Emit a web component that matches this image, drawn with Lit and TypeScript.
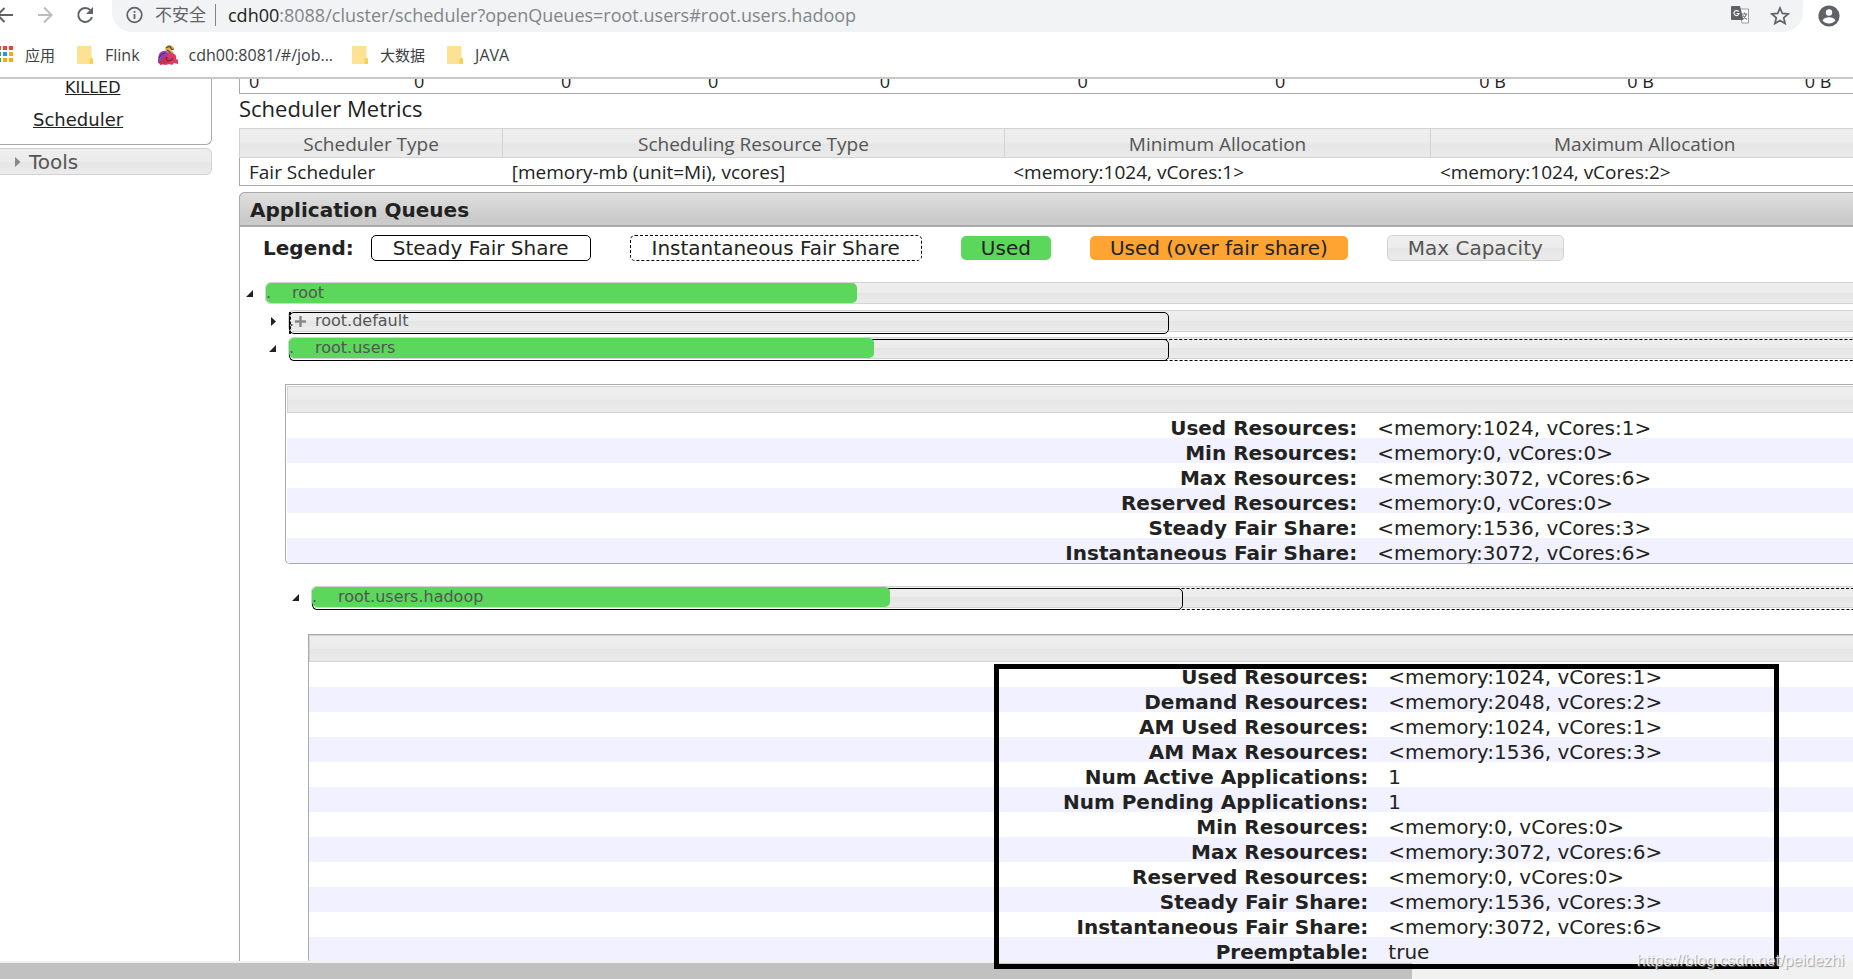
import { LitElement, html, css, svg, nothing } from "lit";
import { customElement, property } from "lit/decorators.js";
import { classMap } from "lit/directives/class-map.js";
import { styleMap } from "lit/directives/style-map.js";

type Row = [label: string, value: string];

interface Queue {
  name: string;
  open: boolean;
  used: number;
  steady?: number;
  instant?: number;
  capacity: number;
  details?: Row[];
  inset?: boolean;
  children?: Queue[];
}

const QUEUES: Queue = {
  name: "root",
  open: true,
  used: 33.4,
  capacity: 81,
  children: [
    { name: "root.default", open: false, used: 0, steady: 50, instant: 0, capacity: 81.4 },
    {
      name: "root.users",
      open: true,
      used: 33.2,
      steady: 50,
      instant: 100,
      capacity: 81.4,
      inset: true,
      details: [
        ["Used Resources:", "<memory:1024, vCores:1>"],
        ["Min Resources:", "<memory:0, vCores:0>"],
        ["Max Resources:", "<memory:3072, vCores:6>"],
        ["Reserved Resources:", "<memory:0, vCores:0>"],
        ["Steady Fair Share:", "<memory:1536, vCores:3>"],
        ["Instantaneous Fair Share:", "<memory:3072, vCores:6>"],
      ],
      children: [
        {
          name: "root.users.hadoop",
          open: true,
          used: 33.2,
          steady: 50,
          instant: 100,
          capacity: 81.4,
          details: [
            ["Used Resources:", "<memory:1024, vCores:1>"],
            ["Demand Resources:", "<memory:2048, vCores:2>"],
            ["AM Used Resources:", "<memory:1024, vCores:1>"],
            ["AM Max Resources:", "<memory:1536, vCores:3>"],
            ["Num Active Applications:", "1"],
            ["Num Pending Applications:", "1"],
            ["Min Resources:", "<memory:0, vCores:0>"],
            ["Max Resources:", "<memory:3072, vCores:6>"],
            ["Reserved Resources:", "<memory:0, vCores:0>"],
            ["Steady Fair Share:", "<memory:1536, vCores:3>"],
            ["Instantaneous Fair Share:", "<memory:3072, vCores:6>"],
            ["Preemptable:", "true"],
          ],
        },
      ],
    },
  ],
};

@customElement("browser-bar")
class BrowserBar extends LitElement {
  static styles = css`
    :host { display: block; flex: none; background: #fff; border-bottom: 2px solid #c8c8c8;
      font-family: "Open Sans", "Noto Sans CJK SC", sans-serif; color: #3c4043; overflow: hidden; }
    .toolbar { display: flex; align-items: center; height: 32px; }
    button { border: 0; padding: 0; background: none; display: flex; flex: none; }
    svg { display: block; flex: none; }
    .nav { display: flex; align-items: center; width: 112px; height: 30px; flex: none; align-self: flex-start; }
    .nav button { width: 38px; }
    .address { flex: 1; display: flex; align-items: center; align-self: stretch; background: #f1f3f4;
      border-radius: 0 0 20px 20px; padding: 0 13px 2px 14px; font-size: 18px; line-height: 28px; color: #80868b; white-space: nowrap; }
    .warn { color: #5f6368; margin-left: 12px; font-size: 17px; }
    .rule { width: 1px; height: 22px; background: #80868b; margin: 0 12px 0 9px; }
    .host { color: #202124; }
    .url { flex: 1; }
    .tools { display: flex; gap: 20px; align-items: center; }
    .profile { margin: 0 13px 0 15px; }
    .bookmarks { display: flex; align-items: center; height: 45px; font-size: 15px; line-height: 24px; }
    a { display: flex; align-items: center; gap: 11px; color: inherit; text-decoration: none; white-space: nowrap; margin-right: 22px; }
    .apps { margin-left: -3px; }
    .latin { font-size: 16px; }
    .jobs { margin: 0 19px 0 -4px; }
  `;

  private folder() {
    return html`<svg width="17" height="18" viewBox="0 0 17 18"><path d="M1 0h12.500q1 0 1 1v11l1.500 1v4q0 1-1 1H1q-1 0-1-1V1q0-1 1-1z" fill="#fde293"/><path d="M12.500 18v-4.500l2-2 1.500 1.500v4q0 1-1 1z" fill="#fbcf50"/></svg>`;
  }

  render() {
    const colors = ["#ea4335", "#ea4335", "#ea4335", "#34a853", "#2196f3", "#fbab04", "#34a853", "#fbab04", "#fbab04"];
    return html`
      <div class="toolbar">
        <div class="nav">
          <button aria-label="Back"><svg width="14" height="18" viewBox="0 0 14 18" fill="none" stroke="#5f6368" stroke-width="2"><path d="M13 9H-2M4.500 2l-7 7 7 7"/></svg></button>
          <button aria-label="Forward"><svg width="15" height="18" viewBox="0 0 15 18" fill="none" stroke="#babcbe" stroke-width="2"><path d="M-1 9H13M6 1.500L13.500 9 6 16.500"/></svg></button>
          <button aria-label="Reload"><svg width="18" height="18" viewBox="0 0 18 18"><path d="M14.500 4.200A7 7 0 1 0 16 11" fill="none" stroke="#5f6368" stroke-width="2"/><path d="M17 1v7h-7z" fill="#5f6368"/></svg></button>
        </div>
        <div class="address">
          <svg width="17" height="18" viewBox="0 0 17 18"><circle cx="8.500" cy="9" r="7.300" fill="none" stroke="#5f6368" stroke-width="1.700"/><path d="M8.500 8v5M8.500 5v1.800" stroke="#5f6368" stroke-width="1.800"/></svg>
          <span class="warn">不安全</span><span class="rule"></span>
          <span class="url"><span class="host">cdh00</span>:8088/cluster/scheduler?openQueues=root.users#root.users.hadoop</span>
          <span class="tools">
            <button aria-label="Translate"><svg width="19" height="18" viewBox="0 0 19 18"><path d="M8 3h9.500v14H11z" fill="#fff" stroke="#9a9da0"/><path d="M1 0h8l3.500 14H1q-1 0-1-1V1q0-1 1-1z" fill="#5f6368"/><path d="M7.600 5.600A2.500 2.500 0 1 0 8 7.500H5.500" fill="none" stroke="#fff" stroke-width="1.200"/><path d="M11 8h5.500M13.500 6.500V8M15.500 8q-1 3.500-4 5M12 9.500q1.500 2.500 4 4" fill="none" stroke="#777" stroke-width="1.100"/></svg></button>
            <button aria-label="Bookmark"><svg width="20" height="19" viewBox="0 0 20 19"><path d="M10 2l2.300 5.400 5.900.5-4.500 3.900 1.400 5.700-5.100-3-5.100 3 1.400-5.700L1.800 7.900l5.900-.5z" fill="none" stroke="#5f6368" stroke-width="1.700"/></svg></button>
          </span>
        </div>
        <button class="profile" aria-label="Profile"><svg width="22" height="22" viewBox="0 0 22 22"><circle cx="11" cy="11" r="10.600" fill="#5f6368"/><circle cx="11" cy="7.500" r="3.200" fill="#fff"/><path d="M4.500 15.500q2-3.200 6.500-3.200t6.500 3.200q-2.500 3-6.500 3t-6.500-3z" fill="#fff"/></svg></button>
      </div>
      <nav class="bookmarks">
        <a class="apps" href="#"><svg width="17" height="17" viewBox="0 0 17 17">${colors.map((c, i) => svg`<rect x=${(i % 3) * 6} y=${Math.floor(i / 3) * 6} width="4" height="4" fill=${c} />`)}</svg>应用</a>
        <a class="latin" href="#">${this.folder()}Flink</a>
        <a class="latin jobs" href="#"><svg width="20" height="20" viewBox="0 0 20 20"><path d="M7 4Q8 0 12 0q4 1 4 4l-3 1 3 3-4 2-4-3z" fill="#d9b25c"/><path d="M8 3q4-3 5 0 0 2 3 1M9 5l4 3" fill="none" stroke="#6b4423" stroke-width="1.300"/><path d="M8 8q5-2 8 1 3 1 2 5l2 1v4l-4-1-2 2-3-1-3 1-5-1z" fill="#dc3a5e"/><path d="M0 15Q0 7 5 6q4-1 5 3l-1 4-4 3-2 3-3-1z" fill="#8a44b4"/><path d="M1 17q3-1 3-4 3-3 6-1l1 5-5 2-4 1z" fill="#c9304e"/><path d="M1 13q2-5 6-5M9 12q-2 3 1 4 4 0 5-3" fill="none" stroke="#5a1d55" stroke-width="1"/></svg>cdh00:8081/#/job...</a>
        <a href="#">${this.folder()}大数据</a>
        <a class="latin" href="#">${this.folder()}JAVA</a>
      </nav>
    `;
  }
}

@customElement("queue-item")
class QueueItem extends LitElement {
  @property({ attribute: false }) queue!: Queue;

  static styles = css`
    :host { display: block; }
    .line { display: flex; align-items: center; }
    .toggle { width: 23px; height: 22px; flex: none; border: 0; padding: 0 0 0 4px; background: none; display: flex; align-items: center; }
    .track { flex: 1; display: flex; }
    .bar { position: relative; display: flex; align-items: center; box-sizing: border-box; height: 22px;
      border: 1px solid #d3d3d3; border-radius: 5px; text-decoration: none; color: #555; font-size: 16px; line-height: 20px;
      background: linear-gradient(#eee, #ececec 50%, #e5e5e5 52%, #ebebeb); }
    .share, .used { position: absolute; left: 0; box-sizing: border-box; border-radius: 5px; }
    .share { top: 1px; height: 22px; }
    .steady { border: 1px solid #000; }
    .instant { border: 1px dashed #000; }
    .used { top: 0; height: 20px; background: #5bd75b; }
    .name { position: relative; padding-left: 9px; }
    .dot { position: relative; width: 6px; }
    .mark { position: relative; width: 11px; height: 11px; }
    .nested { padding-left: 23px; }
    .nested > queue-item { margin-top: 5px; }
    .nested > queue-item:first-child { margin-top: 6px; }
    .nested.after > queue-item:first-child { margin-top: 22px; }
    .panel { margin: 26px 0 0 20px; border: 1px solid #aaa; border-right: 0; border-radius: 0 0 0 5px; overflow: hidden; }
    .panel.inset { margin-top: 25px; padding: 1px 0 0 1px; }
    .head { height: 25px; border: 1px solid #d3d3d3; background: linear-gradient(#eee, #ececec 50%, #e5e5e5 52%, #ebebeb); }
    table { width: 100%; border-collapse: collapse; table-layout: fixed; font-size: 20px; line-height: 20px; color: #222; }
    tr:nth-child(even) { background: #f1f1ff; }
    th { width: 49.4%; text-align: right; padding: 5px 9px 0 0; font-weight: bold; }
    td { text-align: left; padding: 5px 0 0 11px; }
  `;

  render() {
    const q = this.queue;
    const w = (n: number) => styleMap({ width: `${n}%` });
    return html`
      <div class="line">
        <button class="toggle" aria-label="Toggle ${q.name}" aria-expanded=${q.open}>
          <svg width="8" height="9" viewBox="0 0 8 9"><path d=${q.open ? "M7 1v7H0z" : "M2 0l5 4.500-5 4.500z"} fill="#222"/></svg>
        </button>
        <div class="track">
          <a class="bar" href="#${q.name}" style=${w(q.capacity)}>
            ${q.instant === undefined ? nothing : html`<span class="share instant" style=${w(q.instant)}></span>`}
            ${q.steady === undefined ? nothing : html`<span class="share steady" style=${w(q.steady)}></span>`}
            <span class="used" style=${w(q.used)}></span>
            <span class="dot">.</span>
            <svg class="mark" viewBox="0 0 11 11">${q.open ? nothing : svg`<path d="M5.500 0v11M0 5.500h11" stroke="#888" stroke-width="2.500"/>`}</svg>
            <span class="name">${q.name}</span>
          </a>
        </div>
      </div>
      ${q.details
        ? html`<div class=${classMap({ panel: true, inset: !!q.inset })}>
            <div class="head"></div>
            <table>
              ${q.details.map(([k, v]) => html`<tr><th scope="row">${k}</th><td>${v}</td></tr>`)}
            </table>
          </div>`
        : nothing}
      ${q.children
        ? html`<div class=${classMap({ nested: true, after: !!q.details })}>
            ${q.children.map((c) => html`<queue-item .queue=${c}></queue-item>`)}
          </div>`
        : nothing}
    `;
  }
}

@customElement("app-root")
class AppRoot extends LitElement {
  static styles = css`
    :host { display: flex; flex-direction: column; height: 100vh; position: relative; overflow: hidden; background: #fff;
      font-family: "DejaVu Sans", Verdana, sans-serif; color: #222; }
    .view { flex: 1; min-height: 0; overflow: hidden; }
    .page { display: flex; align-items: flex-start; gap: 27px; width: 132.4vw; }
    .side { width: 212px; flex: none; }
    .links { border: 1px solid #aaa; border-top: 0; border-left: 0; border-radius: 0 0 6px 0; height: 65px; display: flex; flex-direction: column; }
    .links a { color: #222; text-decoration: underline; align-self: flex-start; }
    .killed { font-size: 16px; line-height: 20px; margin: -1px 0 0 65px; }
    .sched { font-size: 18px; line-height: 22px; margin: 11px 0 0 33px; }
    .fold { margin-top: 3px; width: 100%; height: 27px; box-sizing: border-box; display: flex; align-items: center; gap: 8px; border: 1px solid #d3d3d3; border-left: 0;
      border-radius: 0 6px 6px 0; padding: 1px 0 0 15px; font: 20px/24px "DejaVu Sans", Verdana, sans-serif; color: #555;
      background: linear-gradient(#eee, #ececec 50%, #e5e5e5 52%, #ebebeb); }
    main { flex: 1; min-width: 0; }
    .metrics { width: 100%; table-layout: fixed; border-collapse: collapse; font-family: "Open Sans", sans-serif; font-size: 19px; line-height: 26px; }
    .metrics td { padding: 2px 0 0 9px; line-height: 25px; text-align: left; border-bottom: 1px solid #aaa; white-space: nowrap; }
    .metrics td:first-child { border-left: 1px solid #aaa; }
    .metrics.top { font-size: 18px; margin-top: -8px; }
    .metrics.top td { padding: 0 0 2px 9px; line-height: 20px; }
    .metrics th { border: 1px solid #d3d3d3; font-weight: normal; color: #555; padding: 2px 0 0; background: linear-gradient(#eee, #ececec 50%, #e5e5e5 52%, #ebebeb); }
    h2 { margin: 0; padding-bottom: 6px; font: 22px/28px "Open Sans", sans-serif; }
    .queues { margin-top: 6px; border-left: 1px solid #aaa; border-top-left-radius: 6px; }
    h3 { margin: 0 0 0 -1px; height: 32px; border: 1px solid #aaa; border-bottom-width: 2px; border-top-left-radius: 6px; padding-left: 10px;
      font-size: 20px; line-height: 34px; background: linear-gradient(#dfdfdf, #cbcbcb 80%, #cbcbcb); }
    .legend { display: flex; align-items: center; gap: 39px; padding: 8px 0 21px 23px; font-size: 20px; line-height: 24px; white-space: nowrap; }
    .legend b { margin-right: -22px; }
    .chip { padding: 0 20px; border-radius: 5px; }
    .chip.steady { padding: 0 21px; border: 1px solid #000; }
    .chip.instant { padding: 0 21px; border: 1px dashed #000; }
    .chip.used { background: #5bd75b; }
    .chip.over { background: #ffa333; }
    .chip.max { border: 1px solid #d3d3d3; color: #555; background: linear-gradient(#eee, #ececec 50%, #e5e5e5 52%, #ebebeb); }
    .tree { padding-left: 2px; }
    .scroll { height: 18px; flex: none; display: flex; align-items: flex-end; background: #f1f1f1; }
    .thumb { height: 16px; width: 76.2%; background: #c1c1c1; }
    .highlight { position: absolute; left: 53.64%; top: 664px; width: 42.36%; height: 305px; box-sizing: border-box; border: 5px solid #000; pointer-events: none; }
    .credit { position: absolute; right: 9px; bottom: 7px; font: 16px/22px "Liberation Sans", Arial, sans-serif; color: rgba(255, 255, 255, 0.8); text-shadow: 1px 1px 1px rgba(120, 120, 120, 0.7); }
  `;

  render() {
    const totals: [string, number][] = [
      ["0", 164], ["0", 145], ["0", 145], ["0", 171], ["0", 198], ["0", 198], ["0", 205], ["0 B", 146], ["0 B", 177], ["0 B", 176], ["", 495],
    ];
    const span = 2220;
    const pct = (n: number) => styleMap({ width: `${(n / span) * 100}%` });
    return html`
      <browser-bar></browser-bar>
      <div class="view">
        <div class="page">
          <aside class="side">
            <div class="links"><a class="killed" href="#">KILLED</a><a class="sched" href="#">Scheduler</a></div>
            <button class="fold"><svg width="6" height="10" viewBox="0 0 6 10"><path d="M0 0l5.500 5L0 10z" fill="#888"/></svg>Tools</button>
          </aside>
          <main>
            <table class="metrics top">
              <tr>${totals.map(([t, n]) => html`<td style=${pct(n)}>${t}</td>`)}</tr>
            </table>
            <h2>Scheduler Metrics</h2>
            <table class="metrics">
              <tr>
                <th style=${pct(263)}>Scheduler Type</th>
                <th style=${pct(502)}>Scheduling Resource Type</th>
                <th style=${pct(427)}>Minimum Allocation</th>
                <th style=${pct(428)}>Maximum Allocation</th>
                <th></th>
              </tr>
              <tr>
                <td>Fair Scheduler</td>
                <td>[memory-mb (unit=Mi), vcores]</td>
                <td>&lt;memory:1024, vCores:1&gt;</td>
                <td>&lt;memory:1024, vCores:2&gt;</td>
                <td></td>
              </tr>
            </table>
            <section class="queues">
              <h3>Application Queues</h3>
              <div class="legend">
                <b>Legend:</b>
                <span class="chip steady">Steady Fair Share</span>
                <span class="chip instant">Instantaneous Fair Share</span>
                <span class="chip used">Used</span>
                <span class="chip over">Used (over fair share)</span>
                <span class="chip max">Max Capacity</span>
              </div>
              <div class="tree"><queue-item .queue=${QUEUES}></queue-item></div>
            </section>
          </main>
        </div>
      </div>
      <div class="scroll"><div class="thumb"></div></div>
      <div class="highlight"></div>
      <div class="credit">https://blog.csdn.net/peidezhi</div>
    `;
  }
}
